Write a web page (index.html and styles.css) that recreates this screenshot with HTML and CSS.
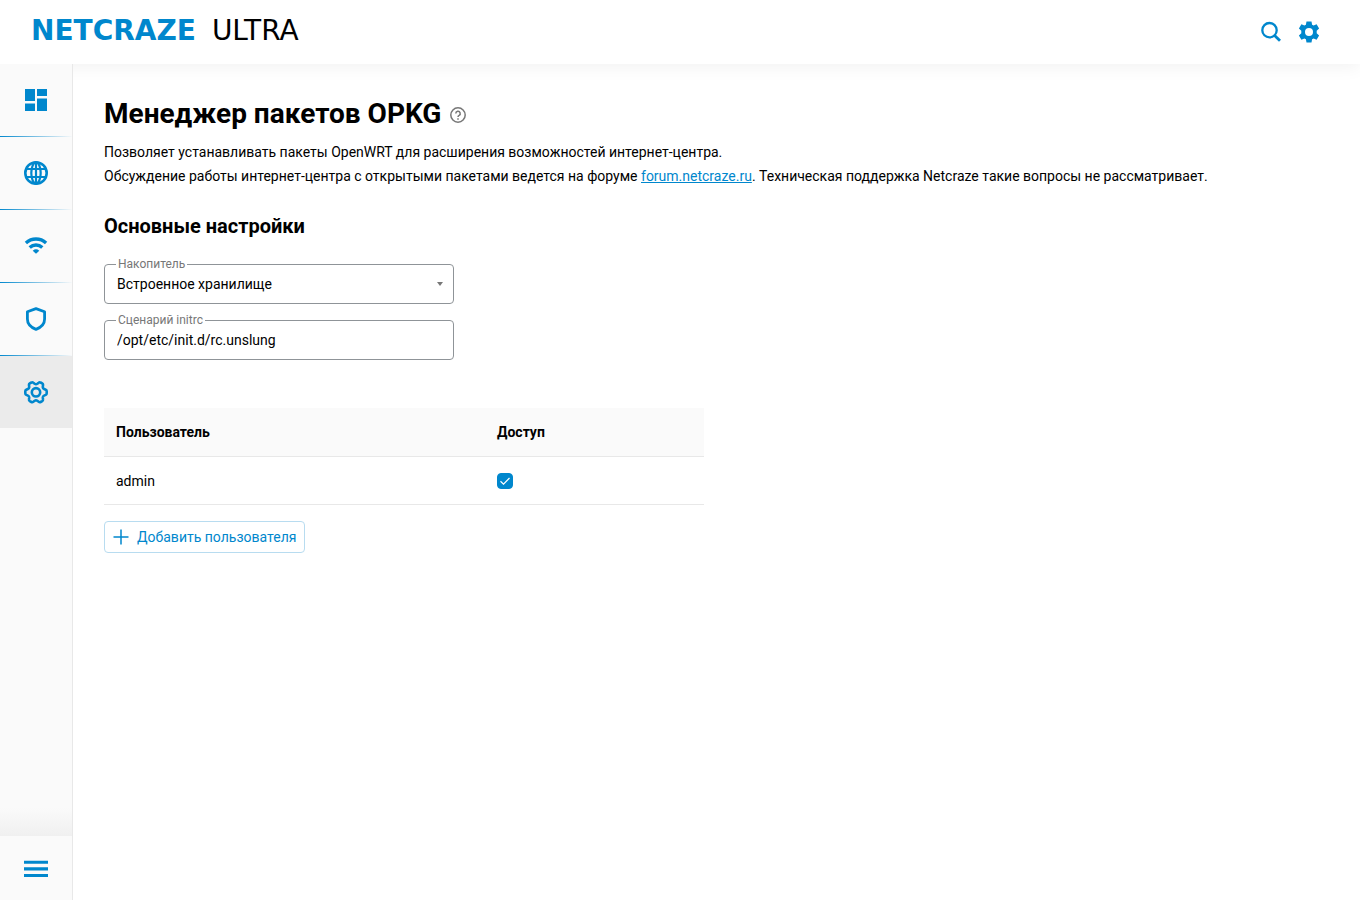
FILE: index.html
```html
<!DOCTYPE html>
<html lang="ru">
<head>
    <meta charset="UTF-8">
    <meta name="viewport" content="width=device-width, initial-scale=1.0">
    <title>Менеджер пакетов OPKG</title>
    <link rel="stylesheet" href="styles.css">
</head>
<body>
    <header class="header">
        <a href="#" class="logo"><span class="logo-brand">NETCRAZE</span><span class="logo-model">ULTRA</span></a>
        <div class="header-actions">
            <button type="button" class="icon-button" aria-label="Поиск">
                <svg width="22" height="22" viewBox="0 0 22 22" fill="none" stroke="currentColor" stroke-width="2.300">
                    <circle cx="9.500" cy="9.200" r="7.200"/>
                    <path d="M14.600 14.400L20 19.800" stroke-width="2.800"/>
                </svg>
            </button>
            <button type="button" class="icon-button" aria-label="Настройки">
                <svg width="22" height="22" viewBox="1 1 22 22" fill="currentColor">
                    <path fill-rule="evenodd" d="M9.500 1.500h5l.6 3.200 1.500.8 3-1.200 2.500 4.300-2.400 2.200v2.400l2.400 2.200-2.500 4.300-3-1.200-1.500.8-.6 3.200h-5l-.6-3.200-1.500-.8-3 1.200-2.500-4.300 2.400-2.200v-2.400L1.900 8.600l2.500-4.300 3 1.200 1.500-.8zM12 8a4 4 0 1 0 0 8 4 4 0 0 0 0-8z"/>
                </svg>
            </button>
        </div>
    </header>

    <div class="layout">
        <nav class="sidebar">
            <a href="#" class="nav-item" aria-label="Системный монитор">
                <svg width="24" height="24" viewBox="0 0 24 24" fill="currentColor">
                    <path d="M1 1h10v12H1zM13 1h10v7H13zM1 15.500h10V23H1zM13 10.500h10V23H13z"/>
                </svg>
            </a>
            <a href="#" class="nav-item" aria-label="Интернет">
                <svg width="24" height="24" viewBox="0 0 24 24" fill="none" stroke="currentColor" stroke-width="2.200">
                    <circle cx="12" cy="12" r="10.700" stroke-width="2.600"/>
                    <ellipse cx="12" cy="12" rx="4.700" ry="10.700"/>
                    <path d="M12 1v22M2 8h20M2 16h20"/>
                </svg>
            </a>
            <a href="#" class="nav-item" aria-label="Мои сети и Wi-Fi">
                <svg width="24" height="24" viewBox="0 0 24 24" fill="none" stroke="currentColor" stroke-width="3.400">
                    <path d="M1.900 8.900Q6.300 5 12 5T22.100 8.900"/>
                    <path d="M5.700 13.500Q8.400 11 12 11T18.300 13.500"/>
                    <path d="M12 19.700L8.700 16.700Q12 14 15.300 16.700z" fill="currentColor" stroke="none"/>
                </svg>
            </a>
            <a href="#" class="nav-item" aria-label="Сетевые правила">
                <svg width="24" height="24" viewBox="0 0 24 24" fill="none" stroke="currentColor" stroke-width="2.800" stroke-linejoin="round">
                    <path d="M12 1.600L20.600 4.800v7.200c0 4.700-3.500 8.400-8.600 10.400-5.100-2-8.600-5.700-8.600-10.400V4.800z"/>
                </svg>
            </a>
            <a href="#" class="nav-item active" aria-label="Управление">
                <svg width="24" height="24" viewBox="0 0 24 24" fill="none" stroke="currentColor" stroke-width="2.600" stroke-linejoin="round">
                    <path d="M7.400 2.500Q8.400 1.900 9.300 2.700L10.700 3.800Q12 4.700 13.300 3.800L14.700 2.700Q15.600 1.900 16.600 2.500L18.200 3.400Q19.200 4 19 5.200L18.800 6.900Q18.700 8.400 20.100 9L21.700 9.700Q22.700 10.200 22.700 11.300V13.300Q22.700 14.400 21.700 14.900L20.100 15.600Q18.700 16.200 18.800 17.700L19 19.400Q19.200 20.500 18.200 21.100L16.600 22Q15.600 22.500 14.700 21.800L13.300 20.800Q12 19.900 10.700 20.800L9.300 21.800Q8.400 22.500 7.400 22L5.800 21.100Q4.800 20.500 5 19.400L5.200 17.700Q5.300 16.200 3.900 15.600L2.300 14.900Q1.300 14.400 1.300 13.300V11.300Q1.300 10.200 2.300 9.700L3.900 9Q5.300 8.400 5.200 6.900L5 5.200Q4.800 4 5.800 3.400z"/>
                    <circle cx="12" cy="12.300" r="4.200"/>
                </svg>
            </a>
            <button type="button" class="menu-toggle" aria-label="Развернуть меню">
                <svg width="24" height="24" viewBox="0 0 24 24" fill="currentColor">
                    <path d="M0 4.700h24v3.100H0zM0 11.300h24v3.100H0zM0 18h24v3.100H0z"/>
                </svg>
            </button>
        </nav>

        <main class="content">
            <div class="page-title">
                <h1>Менеджер пакетов OPKG</h1>
                <button type="button" class="help-button" aria-label="Справка">
                    <svg width="16" height="16" viewBox="0 0 16 16" fill="none" stroke="currentColor" stroke-width="1.500">
                        <circle cx="8" cy="8" r="7.200"/>
                        <path d="M5.800 6.400a2.200 2.200 0 1 1 3.300 1.900C8.300 8.700 8 9 8 10M8 11.200v1.500"/>
                    </svg>
                </button>
            </div>
            <p class="description">
                Позволяет устанавливать пакеты OpenWRT для расширения возможностей интернет-центра.<br>
                Обсуждение работы интернет-центра с открытыми пакетами ведется на форуме <a href="#">forum.netcraze.ru</a>. Техническая поддержка Netcraze такие вопросы не рассматривает.
            </p>

            <h2>Основные настройки</h2>
            <form class="settings">
                <div class="field">
                    <label for="storage">Накопитель</label>
                    <select id="storage">
                        <option>Встроенное хранилище</option>
                    </select>
                    <svg class="field-arrow" width="6" height="4" viewBox="0 0 6 4" fill="currentColor">
                        <path d="M0 0h6L3 4z"/>
                    </svg>
                </div>
                <div class="field">
                    <label for="initrc">Сценарий initrc</label>
                    <input type="text" id="initrc" value="/opt/etc/init.d/rc.unslung">
                </div>
            </form>

            <table class="users">
                <thead>
                    <tr>
                        <th class="col-user">Пользователь</th>
                        <th>Доступ</th>
                    </tr>
                </thead>
                <tbody>
                    <tr>
                        <td><label for="access-admin">admin</label></td>
                        <td>
                            <span class="checkbox">
                                <input type="checkbox" id="access-admin" checked>
                                <svg width="16" height="16" viewBox="0 0 16 16" fill="none" stroke="currentColor" stroke-width="1.200">
                                    <path d="M3.500 8.300l3 2.900 6-6.200"/>
                                </svg>
                            </span>
                        </td>
                    </tr>
                </tbody>
            </table>

            <button type="button" class="add-button">
                <svg width="16" height="16" viewBox="0 0 16 16" fill="none" stroke="currentColor" stroke-width="1.500">
                    <path d="M8 .5v15M.5 8h15"/>
                </svg>
                Добавить пользователя
            </button>
        </main>
    </div>
</body>
</html>
```

FILE: styles.css
```css
* {
    box-sizing: border-box;
}
body {
    margin: 0;
    min-height: 100vh;
    display: flex;
    flex-direction: column;
    font-family: Roboto, "Liberation Sans", sans-serif;
    font-size: 14px;
    line-height: 24px;
    color: #000;
    background: #fff;
}
button, input, select {
    font: inherit;
    color: inherit;
}
button {
    cursor: pointer;
}
svg {
    display: block;
}

/* Header */
.header {
    display: flex;
    align-items: center;
    justify-content: space-between;
    height: 64px;
    padding: 0 40px 0 31px;
    background: #fff;
    box-shadow: 0 4px 16px rgba(0,0,0,0.05);
}
.logo {
    display: flex;
    gap: 16px;
    padding-bottom: 2px;
    font-family: "DejaVu Sans", sans-serif;
    font-size: 28px;
    text-decoration: none;
}
.logo-brand {
    font-weight: bold;
    color: #0087cd;
}
.logo-model {
    font-weight: normal;
    color: #000;
}
.header-actions {
    display: flex;
    gap: 16px;
}
.icon-button {
    padding: 0;
    border: 0;
    background: none;
    color: #0087cd;
}

/* Sidebar */
.layout {
    flex: 1;
    display: flex;
}
.sidebar {
    position: relative;
    display: flex;
    flex-direction: column;
    width: 73px;
    background: #fafafa;
    border-right: 1px solid #e8e8e8;
}
.nav-item {
    display: flex;
    align-items: center;
    justify-content: center;
    height: 73px;
    border-bottom: 1px solid;
    border-image: linear-gradient(to right, #0087cd, #fafafa) 1;
    color: #0087cd;
}
.nav-item.active {
    height: 72px;
    border: 0;
    background: #ebebeb;
}
.menu-toggle {
    display: flex;
    align-items: center;
    justify-content: center;
    height: 64px;
    margin-top: auto;
    padding: 0;
    border: 0;
    background: #fafafa;
    color: #0087cd;
}
.menu-toggle::before {
    content: "";
    position: absolute;
    bottom: 64px;
    left: 0;
    right: 0;
    height: 28px;
    background: linear-gradient(to bottom, #fafafa, #f0f0f0);
}

/* Content */
.content {
    flex: 1;
    padding: 32px 31px;
}
.page-title {
    display: flex;
    align-items: center;
    gap: 9px;
    margin-bottom: 8px;
}
h1 {
    margin: 0;
    font-size: 28px;
    line-height: 36px;
}
.help-button {
    padding: 2px 0 0;
    border: 0;
    background: none;
    color: #777;
}
.description {
    margin: 0 0 24px;
}
.description a {
    color: #0087cd;
}
h2 {
    margin: 0 0 24px;
    font-size: 20px;
    line-height: 28px;
}
.settings {
    display: flex;
    flex-direction: column;
    gap: 16px;
    max-width: 350px;
    margin-bottom: 48px;
}
.field {
    position: relative;
}
.field label {
    position: absolute;
    top: -8px;
    left: 12px;
    padding: 0 2px;
    background: #fff;
    font-size: 12px;
    line-height: 16px;
    color: #777;
}
.field select,
.field input {
    display: block;
    width: 100%;
    height: 40px;
    padding: 0 12px;
    border: 1px solid #8f9498;
    border-radius: 4px;
    background: #fff;
    appearance: none;
}
.field-arrow {
    position: absolute;
    top: 18px;
    right: 11px;
    color: #777;
    pointer-events: none;
}

/* Users */
.users {
    width: 100%;
    max-width: 600px;
    margin-bottom: 16px;
    border-spacing: 0;
    text-align: left;
}
.users th,
.users td {
    height: 48px;
    padding: 0 12px;
    border-bottom: 1px solid #e8e8e8;
}
.users th {
    height: 49px;
    background: #fafafa;
}
.col-user {
    width: 381px;
}
.checkbox {
    position: relative;
    display: block;
    width: 16px;
    height: 16px;
}
.checkbox input {
    display: block;
    width: 16px;
    height: 16px;
    margin: 0;
    border: 1px solid #0087cd;
    border-radius: 4px;
    background: #fff;
    appearance: none;
}
.checkbox input:checked {
    background: #0087cd;
}
.checkbox svg {
    position: absolute;
    top: 0;
    left: 0;
    color: #fff;
    pointer-events: none;
}
.add-button {
    display: flex;
    align-items: center;
    gap: 8px;
    height: 32px;
    padding: 0 8px;
    border: 1px solid #b8dcf0;
    border-radius: 4px;
    background: #fff;
    color: #0087cd;
}
```
